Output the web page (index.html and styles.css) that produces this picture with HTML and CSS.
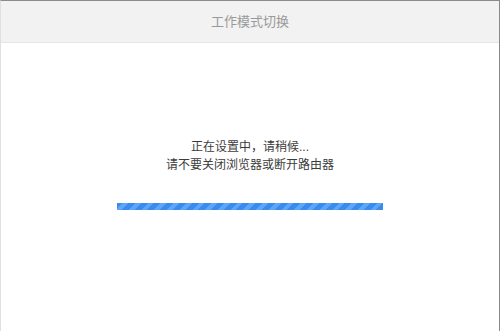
FILE: index.html
```html
<!DOCTYPE html>
<html lang="zh-CN">
<head>
    <meta charset="UTF-8">
    <meta name="viewport" content="width=device-width, initial-scale=1.0">
    <title>工作模式切换</title>
    <link rel="stylesheet" href="styles.css">
</head>
<body>
    <div class="dialog">
        <!-- 标题 -->
        <div class="dialog-header">工作模式切换</div>

        <!-- 进度 -->
        <div class="dialog-body">
            <p class="status">正在设置中，请稍候...<br>请不要关闭浏览器或断开路由器</p>
            <div class="progress"><div class="progress-bar"></div></div>
        </div>
    </div>
</body>
</html>
```

FILE: styles.css
```css
html, body {
    margin: 0;
    padding: 0;
    background-color: #fff;
}
body {
    font-family: "Liberation Sans", "Noto Sans CJK SC", sans-serif;
}
.dialog {
    height: 331px;
    box-sizing: border-box;
    border-top: 1px solid #8a8a8a;
    border-right: 1px solid #8a8a8a;
    border-left: 1px solid #e0e0e0;
    background-color: #fff;
}
.dialog-header {
    height: 41px;
    line-height: 41px;
    background-color: #f2f2f2;
    border-bottom: 1px solid #e6e6e6;
    text-align: center;
    font-size: 13px;
    color: #999;
}
.dialog-body {
    padding-top: 95px;
    text-align: center;
}
.status {
    margin: 0;
    font-size: 12px;
    line-height: 18px;
    color: #3c3c3c;
}
.progress {
    width: 266px;
    height: 7px;
    margin: 29px auto 0;
    background-color: #e8e8e8;
}
.progress-bar {
    width: 100%;
    height: 100%;
    background-color: #3a8ef0;
    background-image: repeating-linear-gradient(
        -45deg,
        #388cf0 0,
        #388cf0 5px,
        #5ea6f5 5px,
        #5ea6f5 9px
    );
}
```
